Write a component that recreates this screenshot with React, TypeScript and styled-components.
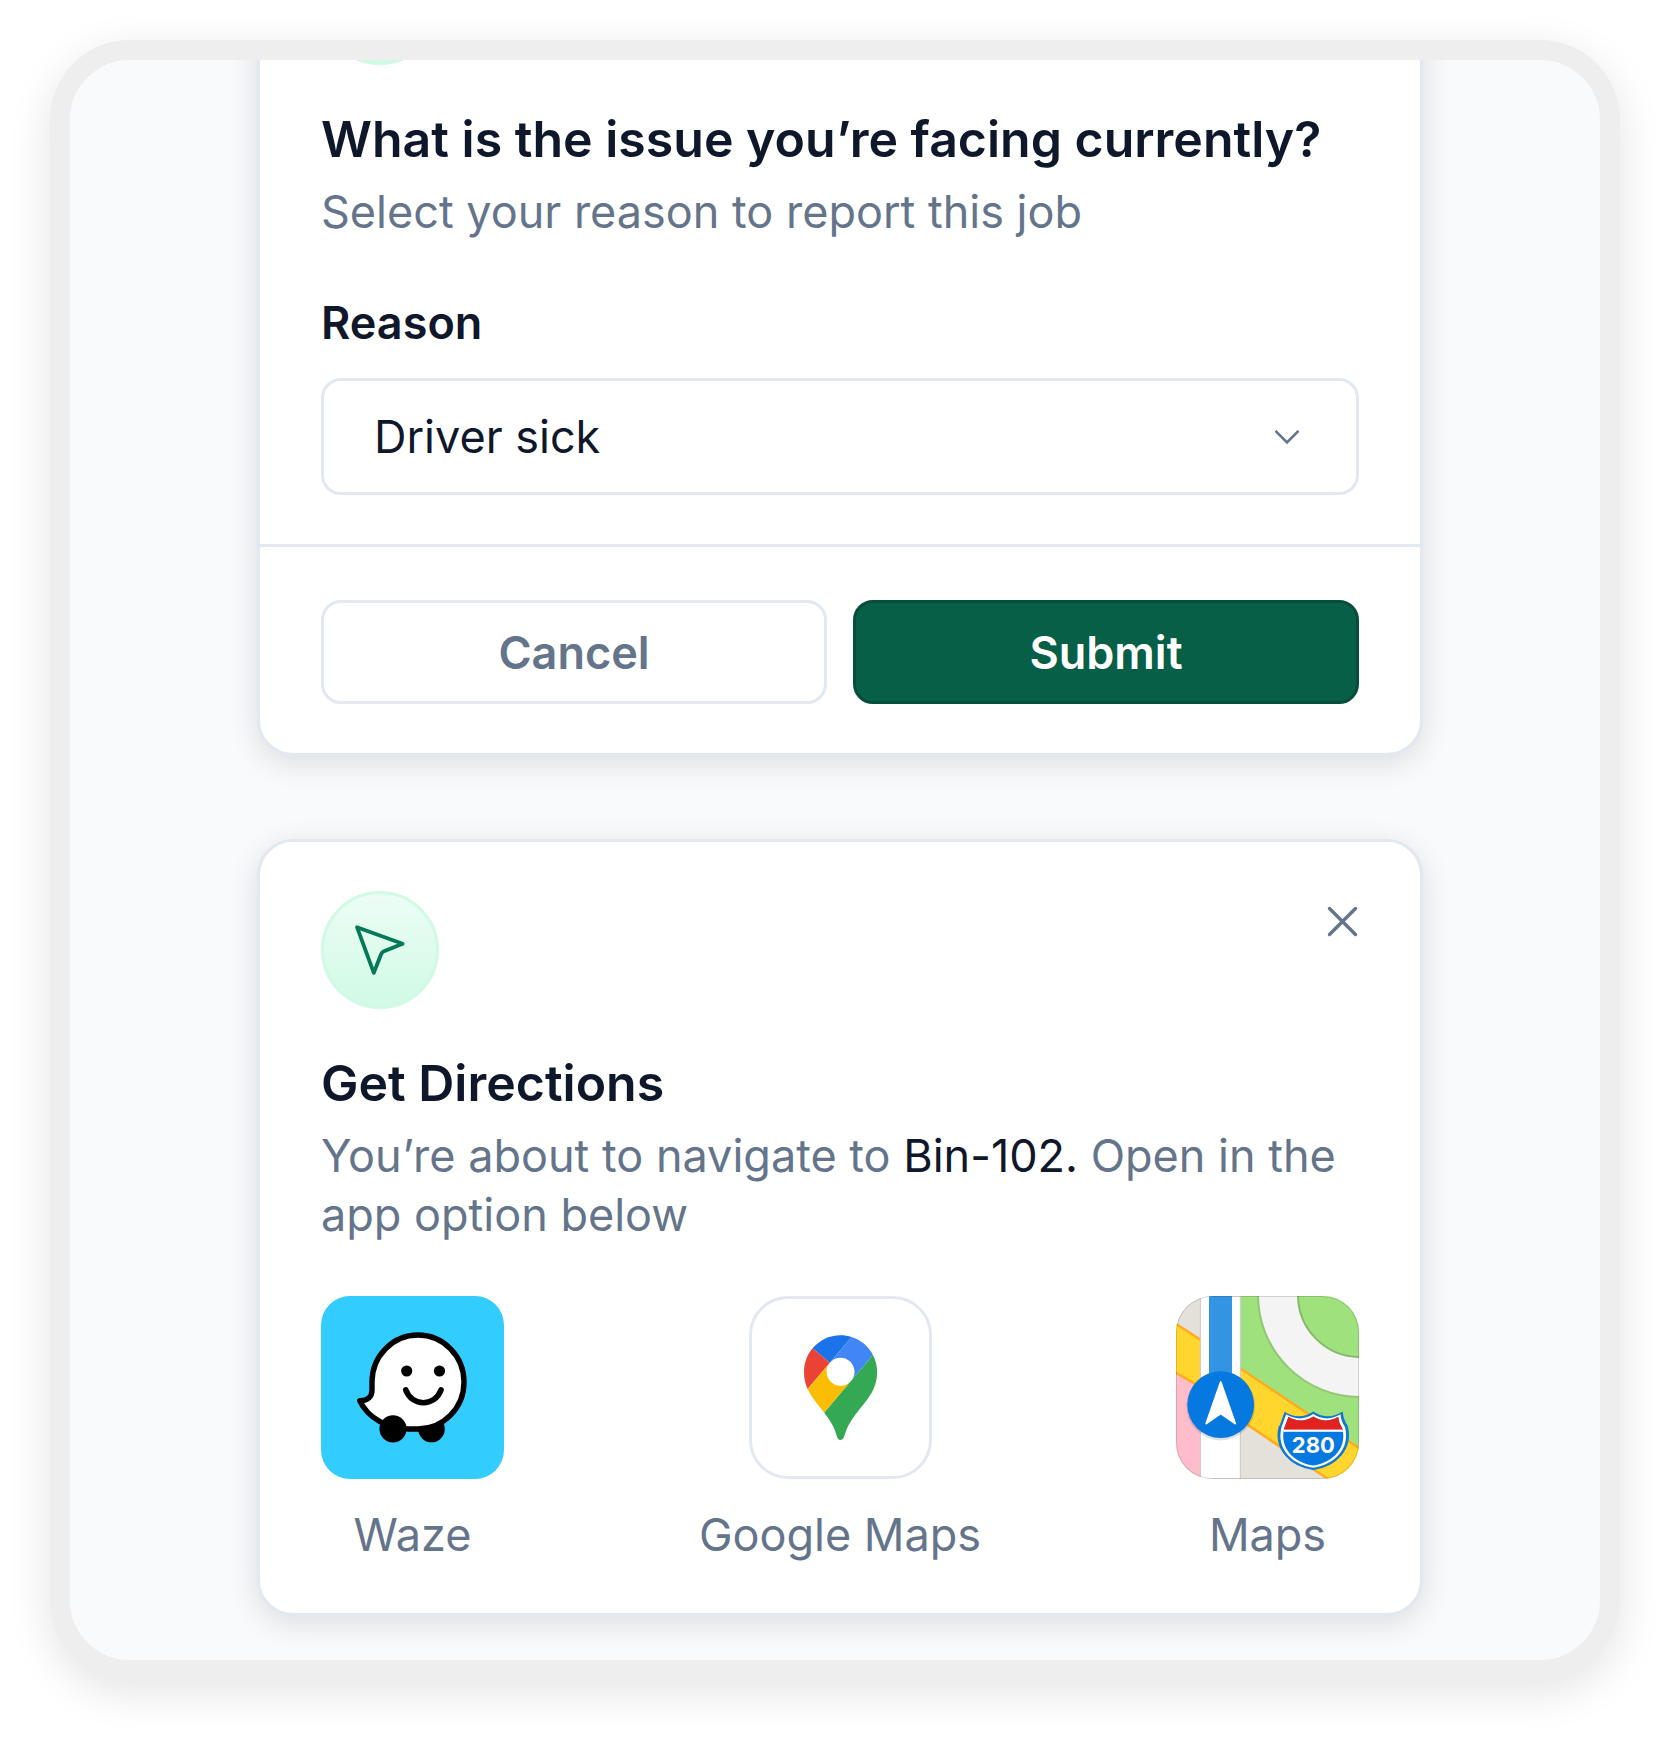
import React, { useState } from 'react';
import styled, { createGlobalStyle, css } from 'styled-components';

const color = {
  ink: '#0f172a',
  muted: '#64748b',
  line: '#e2e8f0',
  frame: '#eeeeee',
  canvas: '#f9fafc',
  mint: '#d1fae5',
  green: '#065f46',
  greenDark: '#064e3b',
  greenMid: '#047857',
};

const GlobalStyle = createGlobalStyle`
  *, *::before, *::after { box-sizing: border-box; }
  body { margin: 0; background: #ffffff; }
  body, button, select { font-family: Inter, "Liberation Sans", sans-serif; }
  h2, p { margin: 0; }
`;

const Page = styled.div`
  display: flex;
  height: 100vh;
  padding: 40px 50px 60px;
  overflow: hidden;
`;

const Screen = styled.main`
  flex: 1;
  min-width: 0;
  display: flex;
  flex-direction: column;
  justify-content: flex-end;
  gap: 83px;
  padding: 0 177px 44px 187px;
  overflow: hidden;
  border: 20px solid ${color.frame};
  border-radius: 80px;
  background: ${color.canvas};
  box-shadow: 0 12px 44px rgba(0, 0, 0, 0.11);
`;

const cardStyles = css`
  flex: none;
  border: 3px solid ${color.line};
  border-radius: 36px;
  background: #ffffff;
  box-shadow: 0 7px 30px rgba(0, 0, 0, 0.12);
`;

const FormCard = styled.form`
  ${cardStyles}
`;

const Card = styled.section`
  ${cardStyles}
`;

const CardBody = styled.div`
  padding: 49px 61px;
`;

const CardFooter = styled.div`
  display: grid;
  grid-template-columns: 1fr 1fr;
  gap: 26px;
  padding: 53px 61px 49px;
  border-top: 3px solid ${color.line};
`;

const CardHeader = styled.div`
  display: flex;
  align-items: flex-start;
  justify-content: space-between;
`;

const Badge = styled.div`
  display: flex;
  align-items: center;
  justify-content: center;
  width: 118px;
  height: 118px;
  border: 3px solid ${color.mint};
  border-radius: 50%;
  background: linear-gradient(#ecfdf5, ${color.mint});
`;

const CloseButton = styled.button`
  display: flex;
  align-items: center;
  justify-content: center;
  width: 34px;
  height: 60px;
  padding: 0;
  border: 0;
  background: none;
  color: ${color.muted};
  cursor: pointer;
`;

const Title = styled.h2`
  margin-top: 40px;
  color: ${color.ink};
  font-size: 50px;
  font-weight: 600;
  line-height: 68px;
`;

const Description = styled.p`
  margin-top: 9px;
  color: ${color.muted};
  font-size: 45px;
  line-height: 59px;
`;

const Destination = styled.span`
  color: ${color.ink};
`;

const FieldLabel = styled.label`
  display: block;
  margin: 52px 0 26px;
  color: ${color.ink};
  font-size: 45px;
  font-weight: 600;
  line-height: 59px;
`;

const SelectBox = styled.div`
  display: grid;
  align-items: center;

  > * {
    grid-area: 1 / 1;
  }

  > svg {
    justify-self: end;
    margin-right: 59px;
    pointer-events: none;
  }
`;

const Select = styled.select`
  appearance: none;
  width: 100%;
  height: 117px;
  padding: 0 100px 0 50px;
  border: 3px solid ${color.line};
  border-radius: 20px;
  background: #ffffff;
  color: ${color.ink};
  font-size: 45px;
`;

const Button = styled.button<{ $primary?: boolean }>`
  height: 104px;
  border: 3px solid ${(p) => (p.$primary ? color.greenDark : color.line)};
  border-radius: 20px;
  background: ${(p) => (p.$primary ? color.green : '#ffffff')};
  color: ${(p) => (p.$primary ? '#ffffff' : color.muted)};
  font-size: 45px;
  font-weight: 600;
  cursor: pointer;
`;

const AppList = styled.nav`
  display: flex;
  justify-content: space-between;
  margin-top: 52px;
`;

const AppLink = styled.a`
  display: flex;
  flex-direction: column;
  align-items: center;
  gap: 26px;
  color: ${color.muted};
  font-size: 45px;
  line-height: 59px;
  text-decoration: none;
`;

const AppTile = styled.span<{ $radius: number; $fill?: string; $outlined?: boolean }>`
  display: flex;
  align-items: center;
  justify-content: center;
  width: 183px;
  height: 183px;
  overflow: hidden;
  border: ${(p) => (p.$outlined ? `3px solid ${color.line}` : '0')};
  border-radius: ${(p) => p.$radius}px;
  background: ${(p) => p.$fill ?? '#ffffff'};
`;

function ChevronIcon() {
  return (
    <svg width="26" height="16" viewBox="0 0 26 16" fill="none" stroke={color.muted} strokeWidth="2.6" aria-hidden="true">
      <path d="M1.5 1.8 13 13.3 24.5 1.8" />
    </svg>
  );
}

function CloseIcon() {
  return (
    <svg width="34" height="34" viewBox="0 0 34 34" fill="none" stroke="currentColor" strokeWidth="3.4" strokeLinecap="round" aria-hidden="true">
      <path d="M4.5 4.5 30.5 30.5M30.5 4.5 4.5 30.5" />
    </svg>
  );
}

function PointerIcon() {
  return (
    <svg width="54" height="54" viewBox="0 0 54 54" fill="none" stroke={color.greenMid} strokeWidth="3.8" strokeLinejoin="round" aria-hidden="true">
      <path d="M4 4.2 49.6 20.8 31 28.2Q29 29 28.2 31L20.8 49.8Z" />
    </svg>
  );
}

function WazeLogo() {
  return (
    <svg width="183" height="183" viewBox="0 0 183 183" aria-hidden="true">
      <circle cx="110.5" cy="133" r="13.3" />
      <path
        d="M51 86A46 47 0 1 1 97 133H88C67 133 47 122 38.8 104.8 46.5 105 51 101 51 94Z"
        fill="#ffffff"
        stroke="#000000"
        strokeWidth="5.4"
        strokeLinejoin="round"
      />
      <circle cx="72" cy="132.8" r="13.6" />
      <circle cx="85.7" cy="75" r="5.6" />
      <circle cx="118.5" cy="75" r="5.6" />
      <path d="M84.8 94C91 111 113.8 111 120 94" fill="none" stroke="#000000" strokeWidth="5.6" strokeLinecap="round" />
    </svg>
  );
}

function GoogleMapsLogo() {
  return (
    <svg width="73" height="105" viewBox="0 0 92.3 132.3" aria-hidden="true">
      <path fill="#1a73e8" d="M60.2 2.2C55.8.8 51 0 46.1 0 32 0 19.3 6.4 10.8 16.5l21.8 18.3L60.2 2.2z" />
      <path fill="#ea4335" d="M10.8 16.5C4.1 24.5 0 34.9 0 46.1c0 8.7 1.7 15.7 4.6 22l28-33.3-21.8-18.3z" />
      <path fill="#4285f4" d="M46.2 28.5c9.8 0 17.7 7.9 17.7 17.7 0 4.3-1.6 8.3-4.2 11.4 0 0 13.9-16.6 27.5-32.7-5.6-10.8-15.3-19-27-22.7L32.6 34.8c3.3-3.8 8.1-6.3 13.6-6.3" />
      <path fill="#fbbc04" d="M46.2 63.8c-9.8 0-17.7-7.9-17.7-17.7 0-4.3 1.5-8.3 4.1-11.3l-28 33.3c4.8 10.6 12.8 19.2 21 29.9l34.1-40.5c-3.3 3.9-8.1 6.3-13.5 6.3" />
      <path fill="#34a853" d="M59.1 109.2c15.4-24.1 33.3-35 33.3-63 0-7.7-1.9-14.9-5.2-21.3L25.6 98c2.6 3.4 5.3 7.3 7.9 11.3 9.4 14.5 6.8 23.1 12.8 23.1s3.4-8.7 12.8-23.2" />
    </svg>
  );
}

const shield =
  'M108.4 116.6Q123 125.5 137.3 116.3 151.5 125.5 166.2 116.6 166.8 124 171 130C177 153 160 170 137.3 173.4 114.5 170 97.5 153 103.5 130 107.8 124 108.4 116.6Z';

function AppleMapsLogo() {
  return (
    <svg width="183" height="183" viewBox="0 0 183 183" aria-hidden="true">
      <defs>
        <clipPath id="shieldFace">
          <path d={shield} transform="translate(137.3 145.5) scale(.86) translate(-137.3 -145.5)" />
        </clipPath>
      </defs>
      <rect width="183" height="183" fill="#e4e0da" />
      <path d="M0 77 25 91.5V183H0Z" fill="#ffbdcc" />
      <path d="M64 0H183V152L64 72Z" fill="#9fe17d" />
      <g fill="#ffd52e" stroke="#ffab1f" strokeWidth="2.4">
        <path d="M-3 26 28 46V93L-3 75Z" />
        <path d="M60 69.5 186 154V206L60 121Z" />
      </g>
      <circle cx="184" cy="-1" r="102" fill="#f4f4f4" stroke="#93c775" strokeWidth="2" />
      <circle cx="184" cy="-1" r="62" fill="#9fe17d" stroke="#86b96a" strokeWidth="2" />
      <rect x="24.4" width="40" height="183" fill="#ffffff" stroke="#cfcdc8" strokeWidth="1.2" />
      <rect x="33" width="23" height="100" fill="#3494e4" />
      <circle cx="44.7" cy="110" r="34.4" fill="#000000" opacity=".12" />
      <circle cx="44.7" cy="108.7" r="33.4" fill="#0579df" />
      <path
        d="M44.7 86 59.2 127.6 44.7 117.4 30.2 127.6Z"
        fill="#ffffff"
        stroke="#ffffff"
        strokeWidth="1.8"
        strokeLinejoin="round"
      />
      <path d={shield} fill="#0f79d0" stroke="#0f79d0" strokeWidth="1.4" />
      <path d={shield} fill="#ffffff" transform="translate(137.3 145.5) scale(.94) translate(-137.3 -145.5)" />
      <g clipPath="url(#shieldFace)">
        <rect x="100" y="114" width="76" height="62" fill="#0579df" />
        <rect x="100" y="114" width="76" height="20" fill="#e0231f" />
        <rect x="100" y="133.6" width="76" height="2.2" fill="#ffffff" />
      </g>
      <text x="137.3" y="157" textAnchor="middle" fill="#ffffff" fontFamily="Inter, sans-serif" fontWeight="700" fontSize="22">
        280
      </text>
      <rect x=".5" y=".5" width="182" height="182" rx="36" fill="none" stroke="#000000" strokeOpacity=".14" />
    </svg>
  );
}

export default function App() {
  const [reason, setReason] = useState('Driver sick');

  return (
    <>
      <GlobalStyle />
      <Page>
        <Screen>
          <FormCard onSubmit={(e) => e.preventDefault()}>
            <CardBody>
              <CardHeader>
                <Badge />
              </CardHeader>
              <Title>What is the issue you’re facing currently?</Title>
              <Description>Select your reason to report this job</Description>
              <FieldLabel htmlFor="reason">Reason</FieldLabel>
              <SelectBox>
                <Select id="reason" value={reason} onChange={(e) => setReason(e.target.value)}>
                  <option>Driver sick</option>
                </Select>
                <ChevronIcon />
              </SelectBox>
            </CardBody>
            <CardFooter>
              <Button type="button">Cancel</Button>
              <Button type="submit" $primary>
                Submit
              </Button>
            </CardFooter>
          </FormCard>

          <Card>
            <CardBody>
              <CardHeader>
                <Badge>
                  <PointerIcon />
                </Badge>
                <CloseButton type="button" aria-label="Close">
                  <CloseIcon />
                </CloseButton>
              </CardHeader>
              <Title>Get Directions</Title>
              <Description>
                You’re about to navigate to <Destination>Bin-102.</Destination> Open in the app option below
              </Description>
              <AppList>
                <AppLink href="#waze">
                  <AppTile $radius={29} $fill="#33ccff">
                    <WazeLogo />
                  </AppTile>
                  Waze
                </AppLink>
                <AppLink href="#google-maps">
                  <AppTile $radius={39} $outlined>
                    <GoogleMapsLogo />
                  </AppTile>
                  Google Maps
                </AppLink>
                <AppLink href="#maps">
                  <AppTile $radius={36}>
                    <AppleMapsLogo />
                  </AppTile>
                  Maps
                </AppLink>
              </AppList>
            </CardBody>
          </Card>
        </Screen>
      </Page>
    </>
  );
}
